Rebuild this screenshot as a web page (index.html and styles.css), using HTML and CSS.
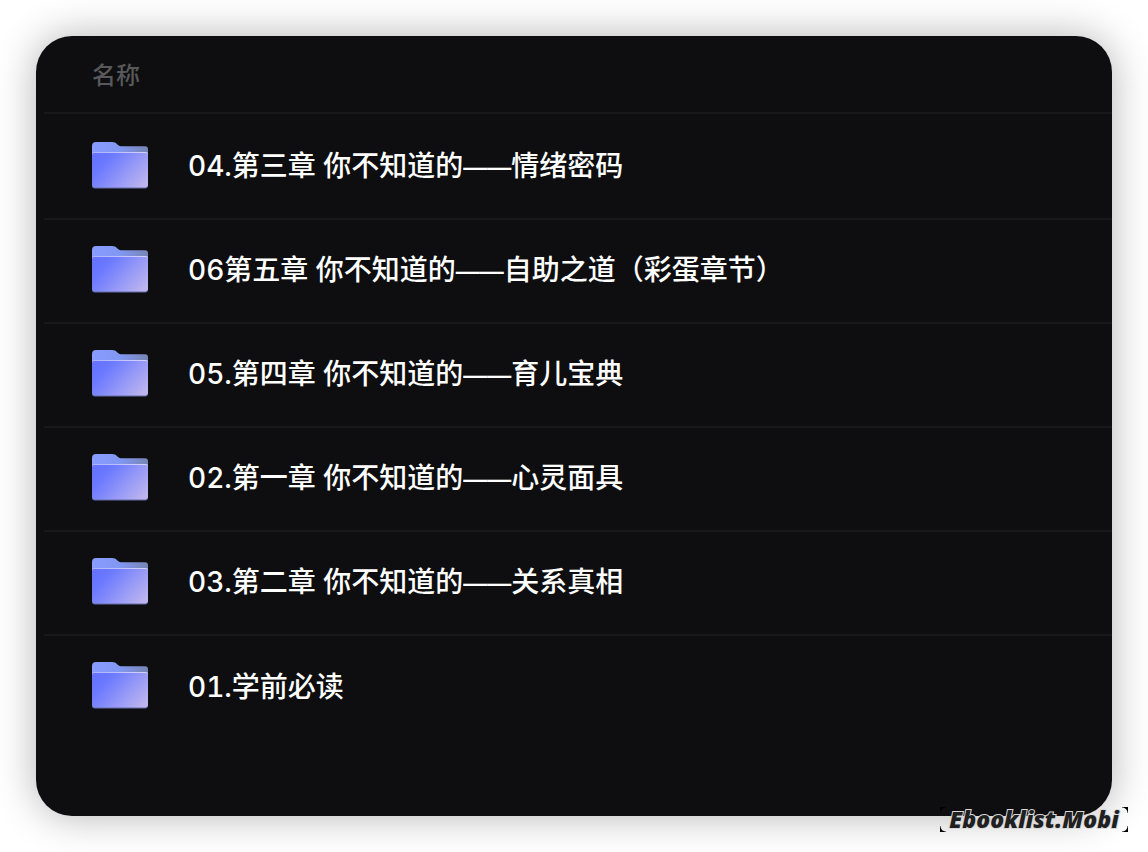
FILE: index.html
```html
<!DOCTYPE html>
<html lang="zh-CN">
<head>
<meta charset="utf-8">
<meta name="viewport" content="width=device-width, initial-scale=1">
<title>名称</title>
<link rel="stylesheet" href="styles.css">
</head>
<body>
<svg class="defs" width="0" height="0" aria-hidden="true">
  <defs>
    <linearGradient id="back" x1="0" y1="0" x2="1" y2="0">
      <stop offset="0" stop-color="#889cff"/>
      <stop offset="0.5" stop-color="#8297f2"/>
      <stop offset="1" stop-color="#7785b4"/>
    </linearGradient>
    <linearGradient id="front" x1="0" y1="0.25" x2="1" y2="0.8">
      <stop offset="0" stop-color="#6573ff"/>
      <stop offset="0.2" stop-color="#6c7aff"/>
      <stop offset="1" stop-color="#bcb5ef"/>
    </linearGradient>
    <linearGradient id="edge" x1="0" y1="0" x2="1" y2="0">
      <stop offset="0" stop-color="#a9b5ff"/>
      <stop offset="1" stop-color="#d6d2fa"/>
    </linearGradient>
    <symbol id="folder" viewBox="0 0 56 48">
      <path fill="url(#back)" d="M0 4a4 4 0 0 1 4-4h16c3 0 4 1 6 3 1 1 2 1.300 4 1.300h23a3 3 0 0 1 3 3V20H0z"/>
      <path fill="url(#edge)" d="M0 12a2 2 0 0 1 2-2h52a2 2 0 0 1 2 2v4H0z"/>
      <path fill="#626baa" d="M0 40h56v3.500a3 3 0 0 1-3 3H3a3 3 0 0 1-3-3z"/>
      <path fill="url(#front)" d="M0 13a2 2 0 0 1 2-2h52a2 2 0 0 1 2 2v29.500a3 3 0 0 1-3 3H3a3 3 0 0 1-3-3z"/>
    </symbol>
  </defs>
</svg>
<main class="panel">
  <table class="files">
    <thead><tr><th scope="col">名称</th></tr></thead>
    <tbody>
      <tr><td><div class="file"><svg class="icon" aria-hidden="true"><use href="#folder"/></svg><span>04.第三章 你不知道的<span class="dash">——</span>情绪密码</span></div></td></tr>
      <tr><td><div class="file"><svg class="icon" aria-hidden="true"><use href="#folder"/></svg><span>06第五章 你不知道的<span class="dash">——</span>自助之道（彩蛋章节）</span></div></td></tr>
      <tr><td><div class="file"><svg class="icon" aria-hidden="true"><use href="#folder"/></svg><span>05.第四章 你不知道的<span class="dash">——</span>育儿宝典</span></div></td></tr>
      <tr><td><div class="file"><svg class="icon" aria-hidden="true"><use href="#folder"/></svg><span>02.第一章 你不知道的<span class="dash">——</span>心灵面具</span></div></td></tr>
      <tr><td><div class="file"><svg class="icon" aria-hidden="true"><use href="#folder"/></svg><span>03.第二章 你不知道的<span class="dash">——</span>关系真相</span></div></td></tr>
      <tr><td><div class="file"><svg class="icon" aria-hidden="true"><use href="#folder"/></svg><span>01.学前必读</span></div></td></tr>
    </tbody>
  </table>
</main>
<div class="watermark">Ebooklist.Mobi</div>
</body>
</html>
```
FILE: styles.css
```css
* { box-sizing: border-box; }

body {
  position: relative;
  min-height: 100vh;
  margin: 0;
  padding: 36px;
  display: flex;
  background: #fff;
  font-family: Inter, "Noto Sans CJK SC", sans-serif;
}

.defs { position: absolute; }

.panel {
  flex: 1;
  padding-left: 8px;
  border-radius: 36px;
  background: #0e0e10;
  box-shadow: 0 0 40px rgba(0, 0, 0, 0.3);
}

.files {
  width: 100%;
  border-spacing: 0;
}

.files th {
  height: 78px;
  padding: 0 48px 2px;
  border-bottom: 2px solid #18181a;
  color: #58585a;
  font-size: 24px;
  font-weight: 500;
  text-align: left;
}

.files td {
  height: 104px;
  padding: 0 48px;
  border-bottom: 2px solid #18181a;
  color: #fff;
  font-size: 28px;
  font-weight: 500;
  font-variant-numeric: tabular-nums;
  line-height: 40px;
}

.files tr:first-child td {
  height: 106px;
  padding-top: 2px;
}

.files tr:last-child td { border-bottom-color: transparent; }

.file {
  display: flex;
  align-items: center;
  gap: 40px;
}

.dash { font-size: 24px; }

.icon {
  flex: none;
  width: 56px;
  height: 48px;
  margin-bottom: 2px;
}

.watermark {
  position: absolute;
  right: 20px;
  bottom: 20px;
  width: 188px;
  height: 25px;
  background:
    radial-gradient(circle at 6px 6px, transparent 5px, #000 6px) left top / 6px 6px,
    radial-gradient(circle at 0 6px, transparent 5px, #000 6px) right top / 6px 6px,
    radial-gradient(circle at 6px 0, transparent 5px, #000 6px) left bottom / 6px 6px,
    radial-gradient(circle at 0 0, transparent 5px, #000 6px) right bottom / 6px 6px;
  background-repeat: no-repeat;
  color: #202020;
  font: italic 800 23px/25px "Open Sans", sans-serif;
  text-align: center;
  -webkit-text-stroke: 2px #d8d8d8;
  paint-order: stroke fill;
}
```
